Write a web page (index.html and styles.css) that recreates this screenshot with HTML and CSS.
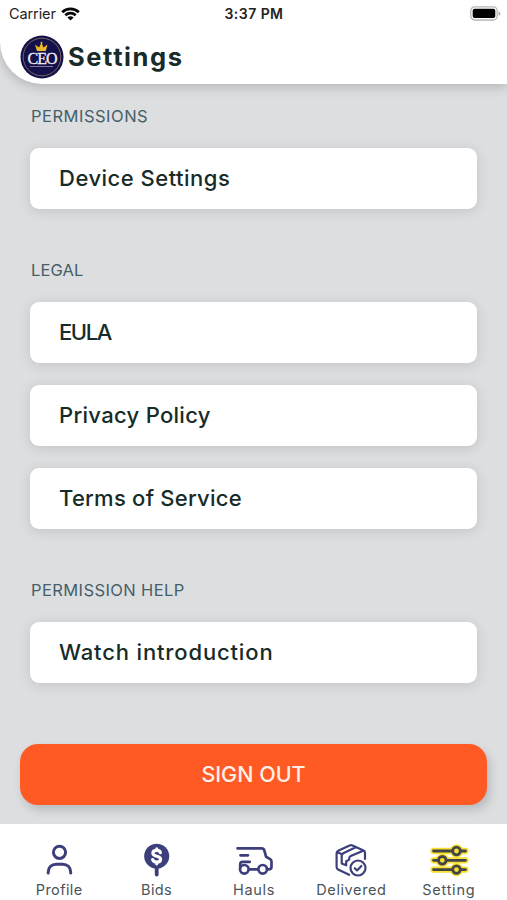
FILE: index.html
```html
<!DOCTYPE html>
<html lang="en">
<head>
<meta charset="utf-8">
<title>Settings</title>
<link rel="stylesheet" href="styles.css">
</head>
<body>
<header class="header">
  <div class="status">
    <div class="carrier"><span>Carrier</span>
      <svg width="19" height="14" viewBox="0 0 19 14" fill="none" stroke="#080808" stroke-width="2.7"><path d="M1.2 5.2C5.8.7 13.2.7 17.8 5.2M4.3 8.2c3-2.8 7.4-2.8 10.4 0"/><path d="M6.4 10.4c1.8-1.7 4.4-1.7 6.2 0L9.5 13.6z" fill="#080808" stroke="none"/></svg>
    </div>
    <span class="time">3:37 PM</span>
    <svg class="battery" width="31" height="15" viewBox="0 0 31 15"><rect x=".8" y=".8" width="26.4" height="13.2" rx="4" fill="#fff" stroke="#b5b5b5" stroke-width="1.3"/><rect x="2.7" y="2.7" width="22.6" height="9.4" rx="2" fill="#000"/><path d="M28.6 5.2c2.3.8 2.3 3.8 0 4.6z" fill="#aaa"/></svg>
  </div>
  <div class="titlebar">
    <svg class="logo" width="44" height="44" viewBox="0 0 44 44"><circle cx="22" cy="22" r="21.5" fill="#13104b"/><circle cx="22" cy="22" r="18.8" fill="none" stroke="#8f7d5c" stroke-width=".8"/><path d="M17 16l-2-6.500 4 3L21.500 7.500l2 5 4-3-1.700 6.500z" fill="#efb829"/><circle cx="21.500" cy="7.800" r="1" fill="#efb829"/><text x="22" y="28.500" text-anchor="middle" class="logo-text">CEO</text><path d="M10 31.500h23" stroke="#8e83a0" stroke-width=".9"/></svg>
    <h1>Settings</h1>
  </div>
</header>
<main>
  <section>
    <h2 class="permissions">PERMISSIONS</h2>
    <div class="card"><span class="device">Device Settings</span></div>
  </section>
  <section>
    <h2 class="legal">LEGAL</h2>
    <div class="card"><span class="eula">EULA</span></div>
    <div class="card"><span class="privacy">Privacy Policy</span></div>
    <div class="card"><span class="terms">Terms of Service</span></div>
  </section>
  <section>
    <h2 class="help">PERMISSION HELP</h2>
    <div class="card"><span class="watch">Watch introduction</span></div>
  </section>
  <button class="signout"><span>SIGN OUT</span></button>
</main>
<nav>
  <a class="tab"><svg width="40" height="36" viewBox="0 0 40 36" fill="none" stroke="#3c3f7b" stroke-width="3" stroke-linecap="round"><circle cx="20.500" cy="10.300" r="6.100"/><path d="M9.200 31v-.8c0-5 3.500-8 8-8h6.500c4.500 0 8 3 8 8v.8"/></svg><span class="profile">Profile</span></a>
  <a class="tab"><svg width="40" height="36" viewBox="0 0 40 36"><circle cx="19.700" cy="14.200" r="12.500" fill="#3c3f7b"/><path d="M19.700 25v7.500" stroke="#3c3f7b" stroke-width="3.800" stroke-linecap="round"/><path d="M23.400 10.600c-.4-1.500-1.700-2.200-3.700-2.200-2.300 0-3.800 1-3.800 2.800 0 4.200 7.700 1.900 7.700 6 0 1.800-1.600 2.900-3.900 2.900-2.100 0-3.600-.9-4.100-2.500M19.700 6.800v1.500m0 12v1.500" fill="none" stroke="#fff" stroke-width="3.200" stroke-linecap="round"/></svg><span class="bids">Bids</span></a>
  <a class="tab"><svg width="40" height="36" viewBox="0 0 40 36" fill="none" stroke="#3c3f7b" stroke-width="2.700" stroke-linecap="round" stroke-linejoin="round"><path d="M3.500 6.300h24c1.700 0 2.500.8 2.900 2.300l1.700 6.200 4.100 2.300c1 .6 1.300 1.400 1.300 2.700v5c0 1.700-.8 2.500-2.500 2.500h-2M24 27.300h-8.500M6.500 13.300h7.500M6.200 25.500v-3c0-1.700.8-2.600 2.500-2.600h7"/><circle cx="10.300" cy="27.300" r="4.300"/><circle cx="28.700" cy="27.300" r="4.300"/></svg><span class="hauls">Hauls</span></a>
  <a class="tab"><svg width="40" height="36" viewBox="0 0 40 36" fill="none" stroke="#3c3f7b" stroke-width="2.200" stroke-linecap="round" stroke-linejoin="round"><path d="M34 17V11c0-1.200-.5-1.900-1.500-2.400L21.500 3.500c-1-.5-1.900-.5-2.900 0L7.200 8.700C6 9.300 5.600 10 5.600 11.200v13.900c0 1.200.5 1.900 1.500 2.400l11 5.300M6.500 10.200l4.500 2.100M24.700 5.300l-12.400 6c-1.100.6-1.600 1.300-1.600 2.500v7.700l4.500 1.800v-4l3-1.700v-1c0-1.200.5-2 1.500-2.500l12.600-5.300"/><circle cx="27" cy="26" r="7.500" fill="#fff"/><path d="M23.800 26.200l2.300 2.200 4.300-4.400"/></svg><span class="delivered">Delivered</span></a>
  <a class="tab"><svg class="sliders" width="40" height="36" viewBox="0 0 40 36" fill="none" stroke-linecap="round"><g stroke="#f6df31" stroke-width="6.300"><path d="M4.500 9h32M4.500 18.300h32M4.500 27.600h32"/><circle cx="27.500" cy="9" r="3.500"/><circle cx="13.300" cy="18.300" r="3.500"/><circle cx="27.500" cy="27.600" r="3.500"/></g><g stroke="#434448" stroke-width="2.800"><path d="M4.500 9h19m8 0h5M4.500 18.300h4.800m8 0h19.200M4.500 27.600h19m8 0h5"/><circle cx="27.500" cy="9" r="3.800"/><circle cx="13.300" cy="18.300" r="3.800"/><circle cx="27.500" cy="27.600" r="3.800"/></g></svg><span class="setting">Setting</span></a>
</nav>
</body>
</html>
```
FILE: styles.css
```css
* { box-sizing: border-box; }
body { margin: 0; height: 900px; display: flex; flex-direction: column; overflow: hidden; background: #dddee0; font-family: Inter, "Open Sans", sans-serif; color: #172b29; }
.header { height: 84px; flex: none; background: #fff; border-bottom-left-radius: 42px; box-shadow: 0 3px 11px rgba(40,45,50,.24); }
.status { height: 27px; display: grid; grid-template-columns: 1fr auto 1fr; align-items: center; padding: 0 6px 0 9px; color: #222; font-size: 14.5px; }
.carrier { display: flex; align-items: center; gap: 5px; }
.carrier span { letter-spacing: -.1px; }
.time { font-size: 14px; font-weight: 600; letter-spacing: .45px; margin-right: 2px; }
.battery { justify-self: end; }
.titlebar { height: 57px; display: flex; align-items: center; padding: 3px 0 0 20px; gap: 4px; }
.logo-text { font: 16px "Liberation Serif", serif; letter-spacing: -1.5px; fill: #f1edf4; stroke: #f1edf4; stroke-width: .3px; letter-spacing: -1px; }
h1 { margin: 0; font-size: 25.5px; line-height: 38px; font-weight: 700; letter-spacing: 1.6px; }
main { height: 740px; flex: none; padding: 20px 20px 0; }
section { padding: 0 10px; margin-bottom: 49px; }
h2 { margin: 0 0 20px; padding-left: 1px; height: 24px; font-size: 16.5px; line-height: 24px; font-weight: 400; color: #465f69; }
.permissions { letter-spacing: .5px; }
.legal { letter-spacing: .1px; }
.help { letter-spacing: .4px; }
.card { height: 61px; display: flex; align-items: center; padding: 0 29px 2px; border-radius: 9px; background: #fff; box-shadow: 0 2px 12px rgba(60,65,70,.17); font-size: 22px; font-weight: 450; white-space: nowrap; }
.device { letter-spacing: .5px; }
.eula { letter-spacing: -1.4px; }
.privacy { letter-spacing: .3px; }
.terms { letter-spacing: .25px; }
.watch { letter-spacing: .85px; }
.card + .card { margin-top: 22px; }
section:nth-of-type(3) { margin-bottom: 61px; }
.signout { display: block; width: 467px; height: 61px; padding: 0 0 2px; border: 0; border-radius: 18px; background: #ff5a24; color: #fff0e7; font: 500 21.5px Inter, sans-serif; box-shadow: 3px 5px 10px rgba(50,60,65,.22); }
nav { height: 76px; flex: none; display: grid; grid-template-columns: repeat(5, 1fr); padding: 18px 10px 0; background: #fff; }
.tab { display: flex; flex-direction: column; align-items: center; padding-left: 1px; color: #4b5358; font-size: 14.5px; line-height: 24px; }
.tab svg { overflow: visible; }
.tab span { letter-spacing: .4px; }
.tab .delivered { letter-spacing: .6px; }
.tab .setting { letter-spacing: .75px; }
.tab .hauls { letter-spacing: .65px; }
```
